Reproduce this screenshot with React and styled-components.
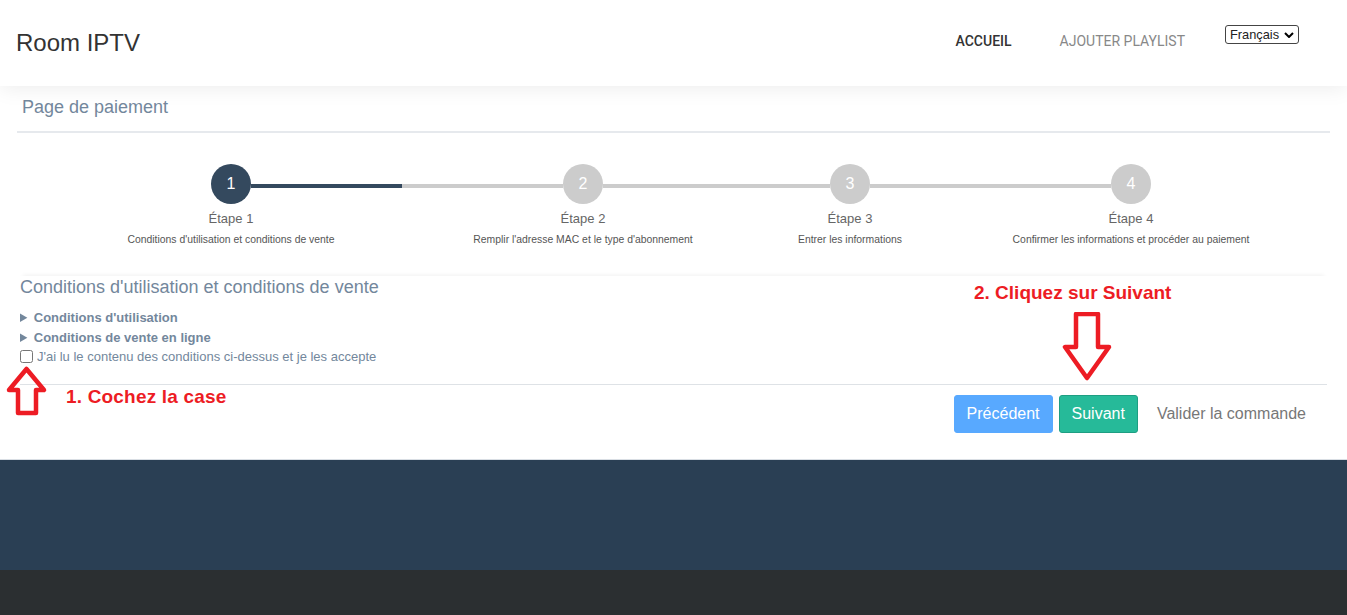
import React from "react";
import styled, { createGlobalStyle } from "styled-components";

const GlobalStyle = createGlobalStyle`
  * {
    box-sizing: border-box;
  }

  body {
    margin: 0;
    background: #fff;
    color: #73879c;
    font-family: "Liberation Sans", Arial, sans-serif;
    overflow: hidden;
  }
`;

// --- Top bar ---
const Navbar = styled.nav`
  height: 86px;
  display: flex;
  align-items: flex-start;
  justify-content: space-between;
  padding: 0 48px 0 16px;
  background: #fff;
  box-shadow: 0 2px 20px rgba(0, 0, 0, 0.08);
  position: relative;
`;

const Brand = styled.div`
  margin-top: 29px;
  font-size: 24px;
  line-height: 28px;
  color: #333;
`;

const NavLinks = styled.div`
  display: flex;
  align-items: flex-start;
`;

const NavLink = styled.span`
  margin-top: 34px;
  margin-right: ${(p) => p.$gap}px;
  font-family: Roboto, sans-serif;
  font-size: 14px;
  line-height: 15px;
  font-weight: ${(p) => (p.$active ? 500 : 400)};
  color: ${(p) => (p.$active ? "#333" : "#888")};
`;

const LangSelect = styled.select`
  margin-top: 25px;
  width: 74px;
  height: 19px;
  padding: 0 0 0 4px;
  appearance: none;
  border: 1px solid #444;
  border-radius: 3px;
  font-family: "Liberation Sans", Arial, sans-serif;
  font-size: 12.8px;
  color: #222;
  background: #fff url("data:image/svg+xml,%3Csvg xmlns='http://www.w3.org/2000/svg' width='10' height='6'%3E%3Cpath d='M1 1l4 4 4-4' fill='none' stroke='%23000' stroke-width='2'/%3E%3C/svg%3E") no-repeat right 4px center;
`;

// --- Main ---
const Main = styled.main`
  height: 374px;
  padding: 0 17px;
  position: relative;
  border-bottom: 1px solid #d9dee4;
`;

const PageTitle = styled.h2`
  margin: 0;
  height: 47px;
  padding: 11px 0 0 5px;
  font-size: 18px;
  line-height: 20px;
  font-weight: 400;
  color: #73879c;
  border-bottom: 2px solid #e6e9ed;
`;

// --- Stepper ---
const Stepper = styled.ol`
  display: flex;
  margin: 31px 4px 0 43px;
  padding: 0;
  list-style: none;
`;

const Step = styled.li`
  width: ${(p) => p.$width}px;
  display: flex;
  flex-direction: column;
  align-items: center;
  text-align: center;
`;

const CircleRow = styled.div`
  width: 100%;
  display: flex;
  align-items: center;
`;

const Connector = styled.span`
  flex: 1;
  height: 4px;
  margin-top: 4px;
  background: ${(p) => (p.$hidden ? "transparent" : p.$done ? "#34495e" : "#ccc")};
`;

const Circle = styled.span`
  width: 40px;
  height: 40px;
  border-radius: 50%;
  display: flex;
  align-items: center;
  justify-content: center;
  font-size: 16px;
  color: #fff;
  background: ${(p) => (p.$active ? "#34495e" : "#ccc")};
`;

const StepName = styled.div`
  margin-top: 7px;
  font-size: 13px;
  line-height: 15px;
  color: #666;
`;

const StepDesc = styled.div`
  margin-top: 8px;
  font-size: 10.4px;
  line-height: 12px;
  color: #555;
`;

// --- Terms ---
const Terms = styled.section`
  margin: 30px 0 0 3px;
  width: 1307px;
  box-shadow: 0 -4px 4px -3px rgba(0, 0, 0, 0.06);
`;

const TermsTitle = styled.h3`
  margin: 0;
  padding-top: 1px;
  font-size: 18px;
  line-height: 20px;
  font-weight: 400;
  color: #73879c;
`;

const TermsItem = styled.details`
  margin-top: ${(p) => p.$top}px;
  font-size: 13px;
  line-height: 15px;
  font-weight: 700;
  color: #73879c;
`;

const AcceptRow = styled.label`
  margin-top: 4px;
  display: flex;
  align-items: center;
  gap: 4px;
  font-size: 13px;
  line-height: 15px;
  color: #73879c;

  input {
    margin: 0;
    width: 13px;
    height: 13px;
  }
`;

const Actions = styled.div`
  margin-top: 20px;
  padding: 10px 21px 0 0;
  border-top: 1px solid #dee2e6;
  display: flex;
  justify-content: flex-end;
  align-items: center;
  gap: 6px;
`;

const ActionButton = styled.button`
  height: 38px;
  padding: 0 12px;
  border: 1px solid ${(p) => p.$border};
  border-radius: 3px;
  background: ${(p) => p.$bg};
  color: #fff;
  font: 400 16px "Liberation Sans", Arial, sans-serif;
`;

const ActionText = styled.span`
  margin-left: 13px;
  font-size: 16px;
  color: #777;
`;

// --- Annotations drawn over the page ---
const Note = styled.span`
  position: absolute;
  left: ${(p) => p.$x}px;
  top: ${(p) => p.$y}px;
  font-size: 19px;
  line-height: 22px;
  font-weight: 700;
  letter-spacing: ${(p) => p.$spacing || 0}px;
  color: #ed1c24;
  white-space: nowrap;
`;

const ArrowMark = styled.svg`
  position: absolute;
  left: ${(p) => p.$x}px;
  top: ${(p) => p.$y}px;
`;

// --- Footer ---
const FooterTop = styled.div`
  height: 110px;
  background: #2a3f54;
`;

const FooterBottom = styled.div`
  height: 45px;
  background: #2b2f31;
`;

const steps = [
  { n: 1, width: 342, desc: "Conditions d'utilisation et conditions de vente" },
  { n: 2, width: 362, desc: "Remplir l'adresse MAC et le type d'abonnement" },
  { n: 3, width: 172, desc: "Entrer les informations" },
  { n: 4, width: 390, desc: "Confirmer les informations et procéder au paiement" },
];

const App = () => {
  return (
    <>
      <GlobalStyle />
      <Navbar>
        <Brand>Room IPTV</Brand>
        <NavLinks>
          <NavLink $active $gap={48}>ACCUEIL</NavLink>
          <NavLink $gap={40}>AJOUTER PLAYLIST</NavLink>
          <LangSelect defaultValue="fr">
            <option value="fr">Français</option>
            <option value="en">English</option>
          </LangSelect>
        </NavLinks>
      </Navbar>

      <Main>
        <PageTitle>Page de paiement</PageTitle>

        <Stepper>
          {steps.map((s, i) => (
            <Step key={s.n} $width={s.width}>
              <CircleRow>
                <Connector $hidden={i === 0} />
                <Circle $active={i === 0}>{s.n}</Circle>
                <Connector $hidden={i === steps.length - 1} $done={i === 0} />
              </CircleRow>
              <StepName>Étape {s.n}</StepName>
              <StepDesc>{s.desc}</StepDesc>
            </Step>
          ))}
        </Stepper>

        <Terms>
          <TermsTitle>Conditions d'utilisation et conditions de vente</TermsTitle>
          <TermsItem $top={13}>
            <summary>Conditions d'utilisation</summary>
          </TermsItem>
          <TermsItem $top={5}>
            <summary>Conditions de vente en ligne</summary>
          </TermsItem>
          <AcceptRow>
            <input type="checkbox" />
            J'ai lu le contenu des conditions ci-dessus et je les accepte
          </AcceptRow>
          <Actions>
            <ActionButton $bg="#58a9ff" $border="#58a9ff">Précédent</ActionButton>
            <ActionButton $bg="#26ba99" $border="#1e9e82">Suivant</ActionButton>
            <ActionText>Valider la commande</ActionText>
          </Actions>
        </Terms>

        <Note $x={974} $y={196}>2. Cliquez sur Suivant</Note>
        <Note $x={66} $y={300} $spacing={0.18}>1. Cochez la case</Note>

        <ArrowMark $x={1062} $y={226} width="50" height="69" viewBox="0 0 50 69">
          <path
            d="M14 2H36V35H47L25 66L3 35H14Z"
            fill="none"
            stroke="#ed1c24"
            strokeWidth="4.5"
            strokeLinejoin="round"
          />
        </ArrowMark>
        <ArrowMark $x={6} $y={279} width="42" height="52" viewBox="0 0 42 52">
          <path
            d="M20.5 4L38 25H30V48H12V25H3Z"
            fill="none"
            stroke="#ed1c24"
            strokeWidth="4.5"
            strokeLinejoin="round"
          />
        </ArrowMark>
      </Main>

      <FooterTop />
      <FooterBottom />
    </>
  );
};

export default App;
